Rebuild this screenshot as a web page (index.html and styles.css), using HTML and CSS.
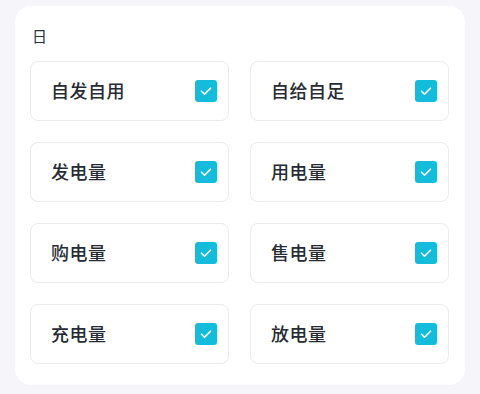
FILE: index.html
```html
<!DOCTYPE html>
<html lang="zh-CN">
<head>
    <meta charset="UTF-8">
    <meta name="viewport" content="width=device-width, initial-scale=1.0">
    <title>日</title>
    <link rel="stylesheet" href="styles.css">
</head>
<body>
    <div class="card">
        <div class="card-title">日</div>

        <div class="option-grid">
            <label class="option">
                <span class="option-name">自发自用</span>
                <span class="check"><svg viewBox="0 0 22 22"><path d="M6.5 11.2l3 3 6-6"/></svg></span>
            </label>
            <label class="option">
                <span class="option-name">自给自足</span>
                <span class="check"><svg viewBox="0 0 22 22"><path d="M6.5 11.2l3 3 6-6"/></svg></span>
            </label>
            <label class="option">
                <span class="option-name">发电量</span>
                <span class="check"><svg viewBox="0 0 22 22"><path d="M6.5 11.2l3 3 6-6"/></svg></span>
            </label>
            <label class="option">
                <span class="option-name">用电量</span>
                <span class="check"><svg viewBox="0 0 22 22"><path d="M6.5 11.2l3 3 6-6"/></svg></span>
            </label>
            <label class="option">
                <span class="option-name">购电量</span>
                <span class="check"><svg viewBox="0 0 22 22"><path d="M6.5 11.2l3 3 6-6"/></svg></span>
            </label>
            <label class="option">
                <span class="option-name">售电量</span>
                <span class="check"><svg viewBox="0 0 22 22"><path d="M6.5 11.2l3 3 6-6"/></svg></span>
            </label>
            <label class="option">
                <span class="option-name">充电量</span>
                <span class="check"><svg viewBox="0 0 22 22"><path d="M6.5 11.2l3 3 6-6"/></svg></span>
            </label>
            <label class="option">
                <span class="option-name">放电量</span>
                <span class="check"><svg viewBox="0 0 22 22"><path d="M6.5 11.2l3 3 6-6"/></svg></span>
            </label>
        </div>
    </div>
</body>
</html>
```

FILE: styles.css
```css
body {
    font-family: "Noto Sans CJK SC", "Noto Sans", sans-serif;
    background: #f6f6fa;
    margin: 0;
    padding: 6px 15px;
}

.card {
    background: white;
    border-radius: 16px;
    padding: 20px 16px 21px 15px;
}

.card-title {
    font-size: 15px;
    line-height: 20px;
    color: #2b303b;
    padding-left: 2px;
    margin-bottom: 15px;
}

.option-grid {
    display: grid;
    grid-template-columns: 1fr 1fr;
    gap: 21px;
}

.option {
    height: 60px;
    box-sizing: border-box;
    border: 1px solid #ebebf0;
    border-radius: 8px;
    display: flex;
    align-items: center;
    justify-content: space-between;
    padding: 0 11px 0 20px;
}

.option-name {
    font-size: 18px;
    font-weight: 500;
    color: #262b35;
    letter-spacing: 0.5px;
    padding-bottom: 2px;
}

.check {
    width: 22px;
    height: 22px;
    border-radius: 3px;
    background: #14bcdc;
    display: flex;
}

.check svg {
    width: 22px;
    height: 22px;
    fill: none;
    stroke: white;
    stroke-width: 1.6;
    stroke-linecap: round;
    stroke-linejoin: round;
}
```
